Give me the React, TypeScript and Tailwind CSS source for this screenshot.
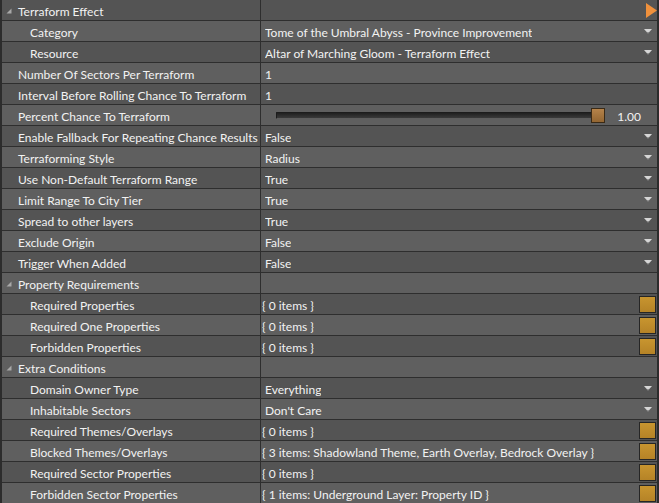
import React from "react";

type Row = {
  name: string;
  group?: boolean;
  indent?: boolean;
  kind?: "select" | "text" | "slider" | "collection" | "link";
  value?: string;
};

const rows: Row[] = [
  { name: "Terraform Effect", group: true, kind: "link" },
  { name: "Category", indent: true, kind: "select", value: "Tome of the Umbral Abyss - Province Improvement" },
  { name: "Resource", indent: true, kind: "select", value: "Altar of Marching Gloom - Terraform Effect" },
  { name: "Number Of Sectors Per Terraform", kind: "text", value: "1" },
  { name: "Interval Before Rolling Chance To Terraform", kind: "text", value: "1" },
  { name: "Percent Chance To Terraform", kind: "slider", value: "1.00" },
  { name: "Enable Fallback For Repeating Chance Results", kind: "select", value: "False" },
  { name: "Terraforming Style", kind: "select", value: "Radius" },
  { name: "Use Non-Default Terraform Range", kind: "select", value: "True" },
  { name: "Limit Range To City Tier", kind: "select", value: "True" },
  { name: "Spread to other layers", kind: "select", value: "True" },
  { name: "Exclude Origin", kind: "select", value: "False" },
  { name: "Trigger When Added", kind: "select", value: "False" },
  { name: "Property Requirements", group: true },
  { name: "Required Properties", indent: true, kind: "collection", value: "{ 0 items }" },
  { name: "Required One Properties", indent: true, kind: "collection", value: "{ 0 items }" },
  { name: "Forbidden Properties", indent: true, kind: "collection", value: "{ 0 items }" },
  { name: "Extra Conditions", group: true },
  { name: "Domain Owner Type", indent: true, kind: "select", value: "Everything" },
  { name: "Inhabitable Sectors", indent: true, kind: "select", value: "Don't Care" },
  { name: "Required Themes/Overlays", indent: true, kind: "collection", value: "{ 0 items }" },
  {
    name: "Blocked Themes/Overlays",
    indent: true,
    kind: "collection",
    value: "{ 3 items: Shadowland Theme, Earth Overlay, Bedrock Overlay }",
  },
  { name: "Required Sector Properties", indent: true, kind: "collection", value: "{ 0 items }" },
  {
    name: "Forbidden Sector Properties",
    indent: true,
    kind: "collection",
    value: "{ 1 items: Underground Layer: Property ID }",
  },
];

function DropArrow() {
  return (
    <svg width="8" height="5" viewBox="0 0 8 5" className="mt-[1px] shrink-0">
      <polygon points="0,0 8,0 4,4.5" fill="#d6d6d6" />
      <polygon points="2.5,3 5.5,3 4,4.5" fill="#8a8a8a" />
    </svg>
  );
}

function ValueCell({ row }: { row: Row }) {
  if (row.kind === "link") {
    return (
      <div className="flex h-full items-center justify-end">
        <svg width="11" height="15" viewBox="0 0 11 15">
          <polygon points="0,0 11,7.5 0,15" fill="#f0913c" />
        </svg>
      </div>
    );
  }

  if (row.kind === "select") {
    return (
      <div className="flex h-full items-center justify-between pl-[4px] pr-[5px]">
        <span className="truncate pt-[3px]">{row.value}</span>
        <DropArrow />
      </div>
    );
  }

  if (row.kind === "text") {
    return (
      <div className="flex h-full items-center pl-[4px]">
        <span className="pt-[3px]">{row.value}</span>
      </div>
    );
  }

  if (row.kind === "slider") {
    return (
      <div className="flex h-full items-center pl-[15px] pr-[16px]">
        <div className="relative flex h-[7px] flex-1 items-center">
          <div className="h-[7px] w-full rounded-[1px] border border-[#1c1c1c] border-b-[#5e5e5e] bg-gradient-to-b from-[#202020] to-[#3a3a3a]" />
          {/* thumb sits over the track */}
          <div className="absolute right-0 top-[-4px] h-[15px] w-[14px] border border-[#3a2a16] bg-gradient-to-b from-[#b5834a] to-[#946632]" />
        </div>
        <span className="w-[36px] shrink-0 pt-[3px] text-right">{row.value}</span>
      </div>
    );
  }

  if (row.kind === "collection") {
    return (
      <div className="flex h-full items-center justify-between pl-[1px] pr-[1px]">
        <span className="truncate pt-[3px]">{row.value}</span>
        <div className="h-[17px] w-[17px] shrink-0 border border-[#262626] bg-gradient-to-b from-[#c8952f] to-[#b58327]" />
      </div>
    );
  }

  return null;
}

export default function App() {
  return (
    <div
      className="h-[503px] w-[659px] overflow-hidden bg-[#2c2c2c] pl-[2px] pr-[2px] text-[12px] text-[#f2f2f2]"
      style={{ fontFamily: "Lato, 'Noto Sans', sans-serif" }}
    >
      {rows.map((row, i) => (
        <div
          key={row.name}
          className={`grid h-[21px] grid-cols-[259px_1fr] border-b border-[#2e2e2e] ${
            i % 2 === 0 ? "bg-[#545454]" : "bg-[#5f5f5f]"
          }`}
        >
          <div className="flex h-[20px] items-center overflow-hidden whitespace-nowrap border-r border-[#2e2e2e]">
            {row.group ? (
              <>
                <svg width="6" height="6" viewBox="0 0 6 6" className="ml-[4px] mr-[6px] mt-[1px] shrink-0">
                  <polygon points="5.5,0.5 5.5,5.5 0.5,5.5" fill="#a8a8a8" />
                </svg>
                <span className="pt-[3px]">{row.name}</span>
              </>
            ) : (
              <span className={`pt-[3px] ${row.indent ? "pl-[28px]" : "pl-[16px]"}`}>{row.name}</span>
            )}
          </div>
          <div className="h-[20px] overflow-hidden whitespace-nowrap">
            <ValueCell row={row} />
          </div>
        </div>
      ))}
    </div>
  );
}
